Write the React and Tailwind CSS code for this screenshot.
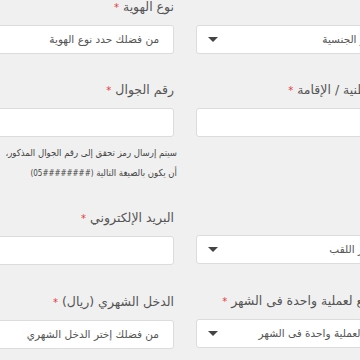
import React from "react";

const Label = ({ text, required = true, className = "" }) => (
  <div className={`h-5 leading-5 text-[12.5px] text-[#555] whitespace-nowrap ${className}`}>
    {text}
    {required && <span className="text-[#e8383d] text-[10px] mr-1">*</span>}
  </div>
);

const Input = ({ placeholder }) => (
  <div className="h-[29px] bg-white border border-[#dcdcdc] rounded-[3px] flex items-center pr-[14px] text-[10.5px] text-[#555] whitespace-nowrap overflow-hidden">
    {placeholder}
  </div>
);

const Select = ({ placeholder, pad = "pr-[15px]" }) => (
  <div className={`h-[29px] bg-white border border-[#dcdcdc] rounded-[3px] flex items-center justify-between pl-[11px] text-[10.5px] text-[#555] whitespace-nowrap overflow-hidden ${pad}`}>
    <span>{placeholder}</span>
    <span className="w-0 h-0 border-l-[5px] border-r-[5px] border-t-[5px] border-l-transparent border-r-transparent border-t-[#444]" />
  </div>
);

export default function App() {
  return (
    <div className="w-[360px] h-[360px] overflow-hidden bg-[#f0f0f0]">
      <div
        dir="rtl"
        className="w-[508px] -ml-[69px] -mt-[3px] grid grid-cols-2 gap-x-[22px] items-start font-['DejaVu_Sans',sans-serif]"
      >
        {/* right column */}
        <div className="flex flex-col">
          <div className="h-5 mb-2" />
          <Select placeholder="من فضلك إختر الجنسية" pad="pr-[13px]" />
          <div className="mt-[26px] mb-2">
            <Label text="رقم الهوية الوطنية / الإقامة" />
          </div>
          <Input placeholder="" />
          <div className="h-[98px]" />
          <Select placeholder="من فضلك إختر اللقب" pad="pr-[15px]" />
          <div className="mt-[27px] mb-2">
            <Label text="المبلغ المتوقع لعملية واحدة فى الشهر" className="pr-[12px]" />
          </div>
          <Select placeholder="المبلغ المتوقع لعملية واحدة فى الشهر" />
        </div>

        {/* left column */}
        <div className="flex flex-col">
          <div className="mb-2">
            <Label text="نوع الهوية" />
          </div>
          <Input placeholder="من فضلك حدد نوع الهوية" />
          <div className="mt-[26px] mb-2">
            <Label text="رقم الجوال" />
          </div>
          <Input placeholder="" />
          <p className="mt-[6px] text-[9.5px] leading-5 text-[#444] whitespace-nowrap -mr-[3px] font-['DejaVu_Sans_Condensed','DejaVu_Sans',sans-serif]">
            سيتم إرسال رمز تحقق إلى رقم الجوال المذكور،
            <br />
            أن يكون بالصيغة التالية{"  "}
            <span dir="ltr" className="text-[8px] inline-block">(05########)</span>
          </p>
          <div className="mt-6 mb-2">
            <Label text="البريد الإلكتروني" />
          </div>
          <Input placeholder="" />
          <div className="mt-[27px] mb-2">
            <Label text="الدخل الشهري (ريال)" />
          </div>
          <Input placeholder="من فضلك إختر الدخل الشهري" />
        </div>
      </div>
    </div>
  );
}
